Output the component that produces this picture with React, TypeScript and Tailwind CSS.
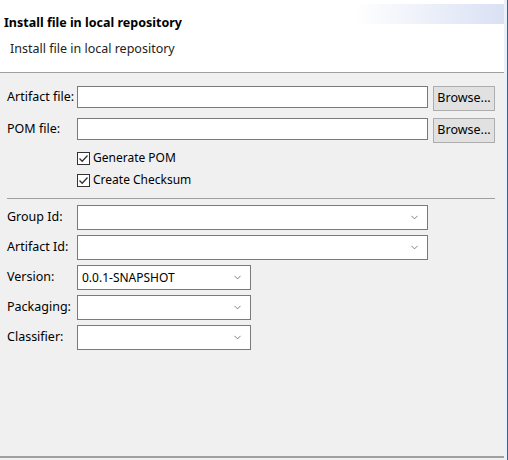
import { ChevronDown } from 'lucide-react';

const font = { fontFamily: '"Noto Sans", "Liberation Sans", Arial, sans-serif' };

function Combo({ wide, value }: { wide?: boolean; value?: string }) {
  return (
    <div
      className={`${wide ? 'w-[351px]' : 'w-[174px]'} h-[25px] bg-white border border-[#7a7a7a] flex items-center justify-between pl-[4px] pr-[7px] text-[12px] text-black`}
    >
      <span>{value}</span>
      <ChevronDown size={11} strokeWidth={1.6} className="text-[#555]" />
    </div>
  );
}

function Check({ label }: { label: string }) {
  return (
    <div className="flex items-center h-[22px] pl-[70px]">
      <div className="w-[13px] h-[13px] bg-white border border-[#333] flex items-center justify-center">
        <svg width="11" height="11" viewBox="0 0 11 11" fill="none">
          <path d="M1.5 5.5 L4.2 8.3 L9.5 2.5" stroke="#333" strokeWidth="1.3" />
        </svg>
      </div>
      <span className="ml-[3px] text-[12px] text-black">{label}</span>
    </div>
  );
}

export default function App() {
  return (
    <div className="w-[508px] h-[460px] flex overflow-hidden" style={font}>
      <div className="flex-1 flex flex-col">
        {/* header */}
        <div className="relative h-[73px] bg-white border-b border-[#a0a0a0]">
          <div className="absolute right-0 top-[4px] w-[150px] h-[20px] bg-gradient-to-r from-white to-[#dae1f4]" />
          <div className="relative pl-[4px] pt-[14px] text-[12.5px] font-bold text-black">
            Install file in local repository
          </div>
          <div className="relative pl-[10px] pt-[7px] text-[12.5px] text-[#222]">
            Install file in local repository
          </div>
        </div>

        {/* body */}
        <div className="flex-1 bg-[#f0f0f0] pl-[7px] pr-[9px] pt-[13px] text-[12.5px] text-black">
          <div className="flex flex-col gap-[7px]">
            {['Artifact file:', 'POM file:'].map((l) => (
              <div key={l} className="flex items-start h-[25px]">
                <span className="w-[70px] h-[22px] leading-[22px]">{l}</span>
                <div className="w-[351px] h-[22px] bg-white border border-[#7a7a7a]" />
                <button className="ml-[5px] w-[62px] h-[25px] bg-[#e1e1e1] border border-[#adadad] text-[12.5px] text-black">
                  Browse...
                </button>
              </div>
            ))}
          </div>

          <div className="mt-[4px]">
            <Check label="Generate POM" />
            <Check label="Create Checksum" />
          </div>

          <div className="mt-[7px] h-px bg-[#a0a0a0]" />

          <div className="mt-[6px] flex flex-col gap-[5px]">
            {[
              { l: 'Group Id:', wide: true },
              { l: 'Artifact Id:', wide: true },
              { l: 'Version:', v: '0.0.1-SNAPSHOT' },
              { l: 'Packaging:' },
              { l: 'Classifier:' },
            ].map((r) => (
              <div key={r.l} className="flex items-center">
                <span className="w-[70px]">{r.l}</span>
                <Combo wide={r.wide} value={r.v} />
              </div>
            ))}
          </div>
        </div>

        {/* footer line */}
        <div className="h-[4px] border-t-2 border-[#a0a0a0] bg-[#f0f0f0]" />
      </div>

      {/* window edge */}
      <div className="w-[5px] flex">
        <div className="w-[3px] bg-[#eaf0f8]" />
        <div className="w-[2px] bg-[#1c6cb4]" />
      </div>
    </div>
  );
}
